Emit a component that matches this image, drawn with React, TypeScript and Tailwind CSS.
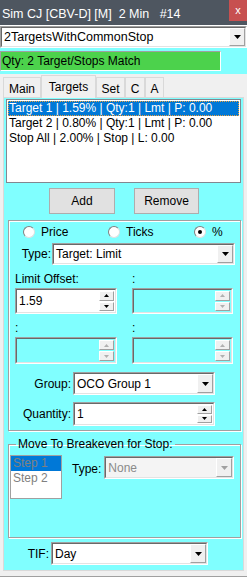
import React from "react";

const sunkenOuter =
  "border border-t-[#a0a0a0] border-l-[#a0a0a0] border-b-white border-r-white";
const sunkenInner =
  "border border-t-[#696969] border-l-[#696969] border-b-[#e3e3e3] border-r-[#e3e3e3]";
const raised =
  "border border-t-white border-l-white border-b-[#a0a0a0] border-r-[#a0a0a0]";

const Tri = ({ up, w, h, color }: { up?: boolean; w: number; h: number; color: string }) => (
  <svg width={w} height={h} viewBox={`0 0 ${w} ${h}`}>
    <polygon
      points={up ? `0,${h} ${w},${h} ${w / 2},0` : `0,0 ${w},0 ${w / 2},${h}`}
      fill={color}
    />
  </svg>
);

const Select = ({
  value,
  className,
  disabled,
}: {
  value: string;
  className: string;
  disabled?: boolean;
}) => (
  <div className={`${sunkenOuter} ${className}`}>
    <div className={`${sunkenInner} h-full flex ${disabled ? "bg-[#f4f4f4]" : "bg-white"}`}>
      <div
        className={`flex-1 pl-[2px] flex items-center leading-none ${
          disabled ? "text-[#8a8a8a]" : "text-black"
        }`}
      >
        {value}
      </div>
      <div className={`${raised} w-[16px] bg-[#f0f0f0] flex items-center justify-center`}>
        <Tri w={7} h={4} color={disabled ? "#a0a0a0" : "#000"} />
      </div>
    </div>
  </div>
);

const Spin = ({
  value,
  className,
  disabled,
}: {
  value?: string;
  className: string;
  disabled?: boolean;
}) => (
  <div className={`${sunkenOuter} ${className}`}>
    <div className={`${sunkenInner} h-full flex ${disabled ? "bg-transparent" : "bg-white"}`}>
      <div className="flex-1 pl-[2px] flex items-center leading-none">{value}</div>
      <div className="w-[16px] flex flex-col gap-[1px] py-[1px] pr-[1px]">
        <div className={`${raised} flex-1 bg-[#f0f0f0] flex items-center justify-center`}>
          <Tri up w={5} h={3} color={disabled ? "#b0b0b0" : "#000"} />
        </div>
        <div className={`${raised} flex-1 bg-[#f0f0f0] flex items-center justify-center`}>
          <Tri w={5} h={3} color={disabled ? "#b0b0b0" : "#000"} />
        </div>
      </div>
    </div>
  </div>
);

const Radio = ({ label, checked }: { label: string; checked?: boolean }) => (
  <div className="flex items-center gap-[6px]">
    <div className="w-[12px] h-[12px] rounded-full border border-t-[#808080] border-l-[#808080] border-b-[#e0e0e0] border-r-[#e0e0e0] bg-white flex items-center justify-center">
      {checked && <div className="w-[4px] h-[4px] rounded-full bg-black" />}
    </div>
    <span>{label}</span>
  </div>
);

const Button = ({ label, className }: { label: string; className: string }) => (
  <div
    className={`border border-[#adadad] bg-[#e1e1e1] flex items-center justify-center ${className}`}
  >
    {label}
  </div>
);

export default function App() {
  const tabs = ["Main", "Targets", "Set", "C", "A"];
  const tabWidths = ["w-[38px]", "w-[55px]", "w-[29px]", "w-[20px]", "w-[19px]"];

  return (
    <div className="w-[247px] h-[577px] bg-[#f0f0f0] flex flex-col overflow-hidden text-[12px] text-black font-['Liberation_Sans',Arial,sans-serif]">
      {/* title bar */}
      <div className="h-[25px] bg-[#4e5660] flex justify-between shrink-0">
        <div className="text-white whitespace-pre pl-[2px] pt-[5px] text-[12.5px]">
          {"Sim CJ [CBV-D] [M]  2 Min   #14"}
        </div>
        <div className="w-[18px] h-[21px] bg-[#c75050] text-white flex items-center justify-center text-[11px]">
          x
        </div>
      </div>

      <div className="h-[1px] bg-white shrink-0" />
      <Select value="2TargetsWithCommonStop" className="h-[22px] w-full shrink-0 text-[12.5px]" />

      {/* status */}
      <div className="h-[26px] bg-[#80ffff] pt-[3px] shrink-0">
        <div className="h-[20px] w-[221px] bg-[#4cd24c] border border-t-[#a0a0a0] border-l-[#a0a0a0] border-b-white border-r-white pl-[1px] flex items-center">
          Qty: 2 Target/Stops Match
        </div>
      </div>

      {/* tabs */}
      <div className="h-[23px] flex items-end pl-[3px] shrink-0">
        {tabs.map((t, i) =>
          t === "Targets" ? (
            <div
              key={t}
              className={`${tabWidths[i]} h-[23px] -mb-[1px] bg-[#f0f0f0] border border-b-0 border-[#d9d9d9] flex items-center justify-center relative z-10`}
            >
              {t}
            </div>
          ) : (
            <div
              key={t}
              className={`${tabWidths[i]} h-[20px] bg-[#f0f0f0] border border-b-0 border-[#d9d9d9] flex items-center justify-center pt-[2px]`}
            >
              {t}
            </div>
          )
        )}
      </div>

      {/* panel */}
      <div className="mx-[3px] h-[474px] border border-[#d9d9d9] bg-[#80ffff] flex flex-col shrink-0">
        {/* list */}
        <div className="ml-[2px] mt-[1px] w-[235px] h-[84px] bg-white border border-[#828790] p-[1px] leading-[15px]">
          <div className="bg-[#0078d7] text-white outline outline-1 outline-dotted outline-[#e8a040] -outline-offset-1 pl-[1px]">
            Target 1 | 1.59% | Qty:1 | Lmt | P: 0.00
          </div>
          <div className="pl-[1px]">Target 2 | 0.80% | Qty:1 | Lmt | P: 0.00</div>
          <div className="pl-[1px]">Stop All | 2.00% | Stop | L: 0.00</div>
        </div>

        <div className="flex mt-[5px] ml-[45px] gap-[19px]">
          <Button label="Add" className="w-[66px] h-[26px]" />
          <Button label="Remove" className="w-[65px] h-[26px]" />
        </div>

        {/* group 1 */}
        <div className="ml-[4px] mt-[6px] w-[233px] h-[211px] border border-[#a0a0a0] shadow-[1px_1px_0_white,inset_1px_1px_0_white] flex flex-col">
          <div className="flex h-[20px] items-center mt-[1px] pl-[14px]">
            <div className="w-[85px]">
              <Radio label="Price" />
            </div>
            <div className="w-[86px]">
              <Radio label="Ticks" />
            </div>
            <Radio label="%" checked />
          </div>
          <div className="flex items-center mt-[1px]">
            <span className="w-[43px] text-right pr-[1px]">Type:</span>
            <Select value="Target: Limit" className="w-[183px] h-[22px]" />
          </div>
          <div className="flex mt-[8px] pl-[6px] leading-none">
            <div className="w-[117px]">Limit Offset:</div>
            <div>:</div>
          </div>
          <div className="flex mt-[3px] pl-[6px] gap-[15px]">
            <Spin value="1.59" className="w-[102px] h-[26px]" />
            <Spin disabled className="w-[101px] h-[26px]" />
          </div>
          <div className="flex mt-[8px] pl-[6px] leading-none">
            <div className="w-[117px]">:</div>
            <div>:</div>
          </div>
          <div className="flex mt-[3px] pl-[6px] gap-[15px]">
            <Spin disabled className="w-[102px] h-[27px]" />
            <Spin disabled className="w-[101px] h-[27px]" />
          </div>
          <div className="flex items-center mt-[8px]">
            <span className="w-[64px] text-right pr-[2px]">Group:</span>
            <Select value="OCO Group 1" className="w-[142px] h-[23px]" />
          </div>
          <div className="flex items-center mt-[7px]">
            <span className="w-[64px] text-right pr-[2px]">Quantity:</span>
            <Spin value="1" className="w-[142px] h-[24px]" />
          </div>
        </div>

        {/* group 2 */}
        <fieldset className="ml-[4px] mt-[6px] w-[233px] h-[101px] border border-[#a0a0a0] shadow-[1px_1px_0_white,inset_1px_1px_0_white] p-0 pl-[1px]">
          <legend className="ml-[6px] px-[2px] leading-[15px]">
            Move To Breakeven for Stop:
          </legend>
          <div className="flex mt-[3px]">
            <div className="w-[52px] h-[44px] bg-white border border-[#a0a0a0] leading-[15px] text-[#808080]">
              <div className="bg-[#0078d7] pl-[2px]">Step 1</div>
              <div className="pl-[2px]">Step 2</div>
            </div>
            <div className="flex items-start ml-[10px] pt-[1px]">
              <span className="pt-[4px] pr-[3px]">Type:</span>
              <Select value="None" disabled className="w-[130px] h-[23px]" />
            </div>
          </div>
        </fieldset>

        <div className="flex items-center mt-[4px]">
          <span className="w-[47px] text-right pr-[2px]">TIF:</span>
          <Select value="Day" className="w-[157px] h-[23px]" />
        </div>
      </div>
      <div className="flex-1 border-b border-[#a0a0a0]" />
    </div>
  );
}
